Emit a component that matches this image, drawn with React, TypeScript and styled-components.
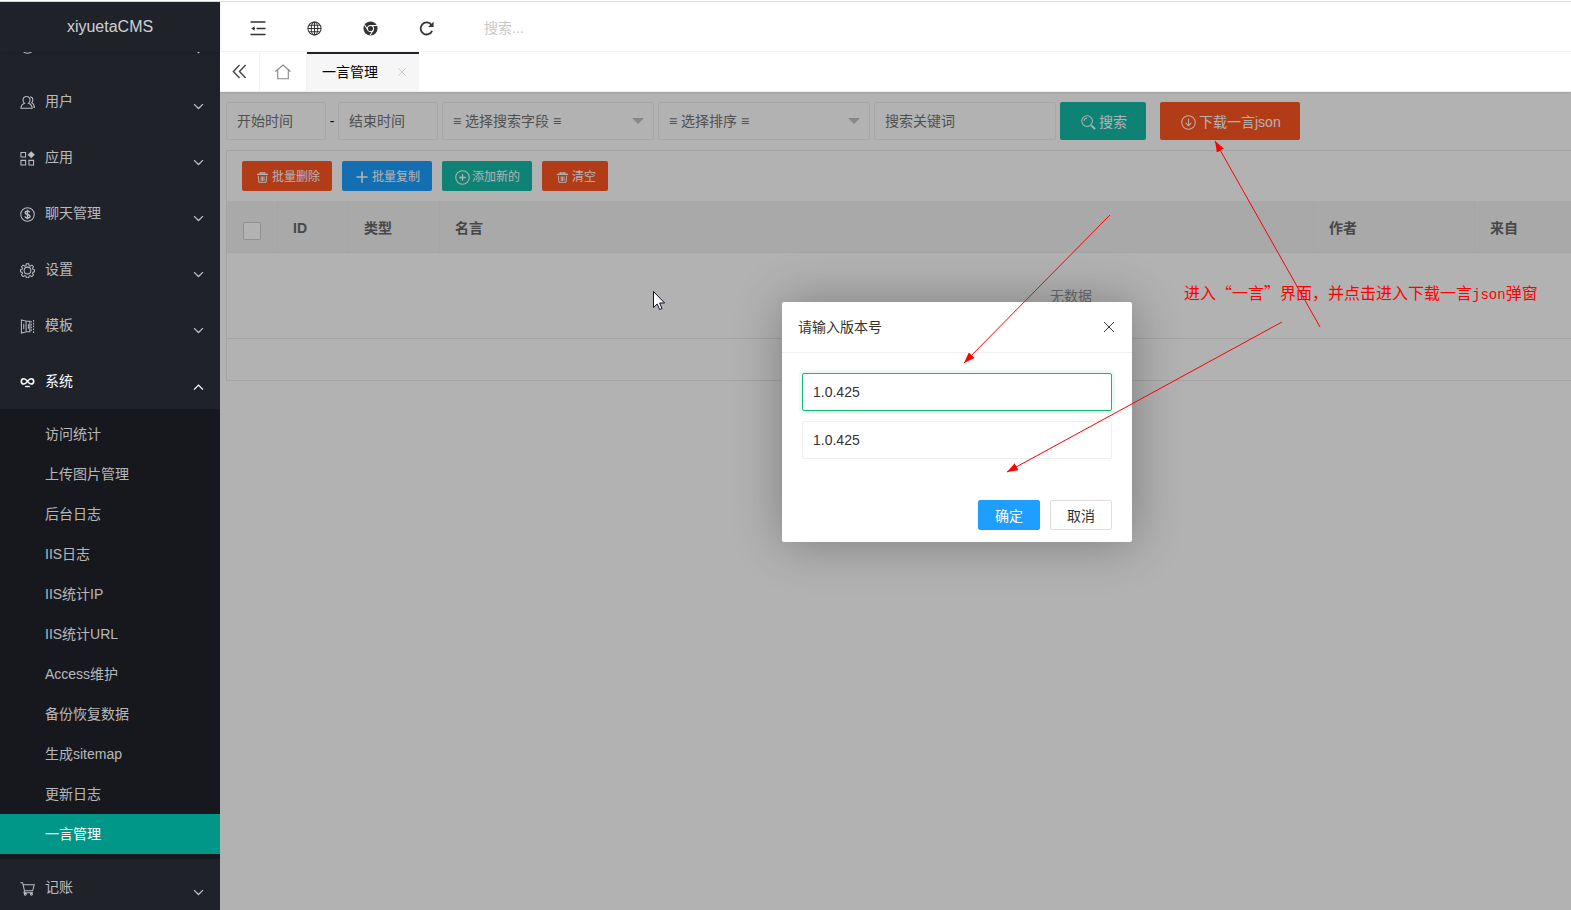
import React from "react";
import styled, { createGlobalStyle, css } from "styled-components";

const GlobalStyle = createGlobalStyle`
  *, *::before, *::after { box-sizing: border-box; }
  html, body, #root { height: 100%; margin: 0; }
  body {
    overflow: hidden;
    background: #fff;
    color: #333;
    font: 14px/20px "Liberation Sans", "Noto Sans CJK SC", sans-serif;
  }
  button, input, select { font: inherit; margin: 0; }
  button { cursor: pointer; }
  ul { list-style: none; margin: 0; padding: 0; }
  a { color: inherit; text-decoration: none; }
`;

/* ---------- icons ---------- */

const shapes: Record<string, React.ReactNode> = {
  user: (
    <>
      <path d="M7 1.5a3.700 3.700 0 0 1 3.700 3.800c0 1.600-.7 2.800-1.700 3.600 2.200.7 3.800 2.300 4 5.300H1c.2-3 1.600-4.600 3.900-5.300-1-.8-1.700-2-1.700-3.600A3.700 3.700 0 0 1 7 1.500z" />
      <path d="M10.800 1.800c2 .3 2.900 1.700 2.900 3.200 0 1.500-.5 2.600-1.300 3.300 2 .8 2.900 2.400 3.100 4.700h-1.500" />
    </>
  ),
  apps: (
    <>
      <path d="M1 1.500h5v5H1zM1 10h5v5H1zM9.500 10h5v5h-5z" />
      <path d="M12 .2L15.800 4 12 7.800 8.200 4z" fill="currentColor" stroke="none" />
    </>
  ),
  dollar: (
    <>
      <circle cx="8" cy="8" r="7.200" />
      <path d="M10.500 5.600C10 4.700 9.100 4.400 8 4.400c-1.500 0-2.500.7-2.500 1.700 0 2.600 5.200 1.100 5.200 3.800 0 1.100-1.200 1.800-2.700 1.800-1.400 0-2.400-.5-2.800-1.500M8 3v10" strokeWidth="1.500" />
    </>
  ),
  gear: (
    <>
      <path d="M6.700.8h2.600l.4 2 1.200.5 1.800-1.100 1.700 1.800-1 1.700.5 1.200 1.700.3v2.200l-1.700.4-.5 1.200 1 1.700-1.700 1.800-1.800-1.100-1.200.5-.4 1.800H6.700l-.4-1.800-1.200-.5-1.800 1.100-1.700-1.800 1-1.700-.5-1.200L.4 9.400V7.200l1.700-.3.5-1.200-1-1.700 1.700-1.800 1.800 1.100 1.200-.5z" />
      <circle cx="8" cy="8" r="3.600" />
    </>
  ),
  template: (
    <>
      <path d="M1.500 1l5 1.200v11.600l-5 1.200z" />
      <path d="M4 5v6M7 2.500h3.500v11H7M9 5.500v5" />
      <path d="M12 2v12M14.500 1v14" strokeDasharray="1.800 1.200" />
    </>
  ),
  infinity: (
    <>
      <path d="M8 6.800C6.500 4.800 5.500 4 4.200 4a2.800 2.800 0 0 0 0 5.600C5.500 9.600 6.500 8.800 8 6.800c1.500-2 2.500-2.800 3.800-2.800a2.800 2.800 0 0 1 0 5.600C10.500 9.600 9.500 8.800 8 6.800z" strokeWidth="1.700" />
      <path d="M5.500 12.300h5" strokeWidth="1.400" />
    </>
  ),
  cart: (
    <>
      <path d="M.5 1.800h2.300l2 8.700h8.700L15.200 4H3.600M4.800 10.500l-.6 2h9.600" />
      <circle cx="5.600" cy="14.200" r="1" />
      <circle cx="12.200" cy="14.200" r="1" />
    </>
  ),
  shrink: (
    <>
      <path d="M.5 2h15M6.500 8.500h9M.5 14.500h15" strokeWidth="1.600" />
      <path d="M4.500 6.300v4.400L1.300 8.500z" fill="currentColor" stroke="none" />
      <path d="M4 8.500h1" />
    </>
  ),
  globe: (
    <>
      <circle cx="8" cy="8" r="7" />
      <ellipse cx="8" cy="8" rx="3.500" ry="7" />
      <path d="M8 1v14M1 8h14M2.200 4.500h11.600M2.200 11.500h11.600" />
    </>
  ),
  chrome: (
    <>
      <circle cx="8" cy="8" r="7.500" fill="currentColor" stroke="none" />
      <circle cx="8" cy="8" r="3.300" stroke="#fff" />
      <path d="M8 4.700h6.700M5.200 9.700L1.800 4.200M10.800 9.700l-3.200 5.600" stroke="#fff" />
    </>
  ),
  refresh: (
    <>
      <path d="M13.300 4.200A6.400 6.400 0 1 0 14 10.500" strokeWidth="1.900" />
      <path d="M15.500.8v5.700H9.800z" fill="currentColor" stroke="none" />
    </>
  ),
  doubleLeft: <path d="M8 1L1.500 8 8 15M14.500 1L8 8l6.500 7" strokeWidth="1.500" />,
  home: <path d="M.5 7.500L8 1l7.500 6.500M2.700 6v8.700h10.600V6" />,
  close: <path d="M2 2l12 12M14 2L2 14" />,
  closeThin: <path d="M3 3l10 10M13 3L3 13" strokeWidth="1" />,
  search: (
    <>
      <circle cx="6.500" cy="6.500" r="5.700" />
      <path d="M3.300 6.500a3.200 3.200 0 0 1 3.200-3.200" />
      <path d="M11 11l4 4" strokeWidth="2" />
    </>
  ),
  download: (
    <>
      <circle cx="8" cy="8" r="7.200" />
      <path d="M8 4v7.500M5 8.500l3 3 3-3" />
    </>
  ),
  trash: (
    <>
      <path d="M0 3.500h16M4.500 3V1.200h7V3" strokeWidth="1.800" />
      <path d="M2 5.500l.7 9.500h10.600l.7-9.500M6 6.500V13M8 6.500V13M10.200 6.500V13" strokeWidth="1.400" />
    </>
  ),
  plus: <path d="M8 .5v15M.5 8h15" strokeWidth="2.200" />,
  circlePlus: (
    <>
      <circle cx="8" cy="8" r="7.200" />
      <path d="M8 4.500v7M4.500 8h7" strokeWidth="1.400" />
    </>
  ),
  down: <path d="M1.500 4.500L8 11l6.500-6.500" strokeWidth="1.900" />,
  up: <path d="M1.500 12.500L8 6l6.500 6.500" strokeWidth="1.900" />,
};

const Glyph = styled.svg`
  display: block;
  flex: none;
  fill: none;
  stroke: currentColor;
  stroke-width: 1.1;
`;

function Icon({ name, size = 16 }: { name: string; size?: number }) {
  return (
    <Glyph width={size} height={size} viewBox="0 0 16 16" aria-hidden="true">
      {shapes[name]}
    </Glyph>
  );
}

/* ---------- shell ---------- */

const Page = styled.div`
  position: relative;
  display: flex;
  flex-direction: column;
  height: 100vh;
  overflow: hidden;
`;

const WindowEdge = styled.div`
  flex: none;
  height: 2px;
  border-bottom: 1px solid #dadada;
`;

const Shell = styled.div`
  display: flex;
  flex: 1;
  min-height: 0;
`;

const Sidebar = styled.aside`
  display: flex;
  flex: none;
  flex-direction: column;
  width: 220px;
  background: #20222a;
  color: rgba(255, 255, 255, 0.7);
`;

const Brand = styled.div`
  flex: none;
  height: 50px;
  line-height: 50px;
  font-size: 16px;
  text-align: center;
  color: rgba(255, 255, 255, 0.8);
  box-shadow: 0 1px 2px rgba(0, 0, 0, 0.15);
`;

const NavScroll = styled.nav`
  flex: 1;
  min-height: 0;
  overflow: hidden;
`;

const NavList = styled.ul`
  margin-top: -35px;
`;

const NavButton = styled.button<{ $open?: boolean }>`
  display: flex;
  align-items: center;
  gap: 10px;
  width: 100%;
  height: 56px;
  padding: 0 16px 0 20px;
  border: 0;
  background: none;
  color: ${(p) => (p.$open ? "#fff" : "inherit")};
  text-align: left;
`;

const NavLabel = styled.span`
  flex: 1;
`;

const NavIcon = styled.span`
  padding-top: 2px;
`;

const Caret = styled.span`
  padding-top: 11px;
`;

const SubList = styled.ul`
  padding: 5px 0;
  border-radius: 2px;
  background: #17181d;
`;

const SubLink = styled.a<{ $active?: boolean }>`
  display: block;
  height: 40px;
  padding-left: 45px;
  line-height: 40px;
  ${(p) =>
    p.$active &&
    css`
      background: #009688;
      color: #fff;
    `}
`;

const Main = styled.main`
  display: flex;
  flex: 1;
  flex-direction: column;
  min-width: 0;
`;

const Header = styled.header`
  display: flex;
  flex: none;
  align-items: center;
  height: 50px;
  padding-left: 10px;
  border-bottom: 1px solid #f4f4f4;
`;

const HeaderButton = styled.button`
  display: flex;
  align-items: center;
  justify-content: center;
  width: 56px;
  height: 49px;
  padding: 3px 0 0;
  border: 0;
  background: none;
  color: #333;
`;

const HeaderSearch = styled.input`
  width: 220px;
  margin-left: 20px;
  padding: 3px 10px 0;
  border: 0;
  outline: 0;
  &::placeholder { color: #c8c8c8; }
`;

const TabBar = styled.div`
  position: relative;
  z-index: 1;
  display: flex;
  flex: none;
  height: 40px;
  background: #fff;
  border-bottom: 1px solid #eee;
  box-shadow: 0 1px 2px rgba(0, 0, 0, 0.1);
`;

const TabButton = styled.button<{ $w: number; $tone: string }>`
  display: flex;
  align-items: center;
  justify-content: center;
  width: ${(p) => p.$w}px;
  padding: 0;
  border: 0;
  border-right: 1px solid #f3f3f3;
  background: none;
  color: ${(p) => p.$tone};
`;

const ActiveTab = styled.div`
  display: flex;
  align-items: center;
  gap: 18px;
  padding: 0 11px 2px 15px;
  border-top: 2px solid #20222a;
  background: #f6f6f6;
  color: #000;
`;

const TabClose = styled.button`
  display: flex;
  padding: 1px;
  border: 0;
  background: none;
  color: #b8b8b8;
`;

const Workspace = styled.section`
  position: relative;
  flex: 1;
  min-height: 0;
  overflow: hidden;
  padding: 10px 0 0 6px;
`;

/* ---------- filters and table ---------- */

const FilterForm = styled.form`
  display: flex;
  align-items: center;
  gap: 4px;
  margin-bottom: 10px;
`;

const DateRange = styled.div`
  display: flex;
  align-items: center;
`;

const Dash = styled.span`
  width: 12px;
  text-align: center;
  color: #000;
`;

const TextField = styled.input<{ $w?: string; $focus?: boolean }>`
  width: ${(p) => p.$w || "100%"};
  height: 38px;
  padding: 0 10px;
  border: 1px solid #eee;
  border-radius: 2px;
  outline: 0;
  background: #fff;
  color: #333;
  &::placeholder { color: #757575; }
  ${(p) =>
    p.$focus &&
    css`
      border-color: #16b777;
      box-shadow: 0 0 0 3px rgba(22, 183, 119, 0.08);
    `}
`;

const SelectWrap = styled.div`
  position: relative;
  width: 212px;
  &::after {
    content: "";
    position: absolute;
    top: 16px;
    right: 10px;
    border: 6px solid transparent;
    border-top-color: #c2c2c2;
    border-bottom: 0;
    pointer-events: none;
  }
`;

const SelectField = styled.select`
  appearance: none;
  width: 100%;
  height: 38px;
  padding: 0 10px;
  border: 1px solid #eee;
  border-radius: 2px;
  background: #fff;
  color: #757575;
`;

const tones = {
  red: "#ff5722",
  blue: "#1e9fff",
  green: "#16baaa",
};

const ActionButton = styled.button<{ $tone: keyof typeof tones; $small?: boolean }>`
  display: inline-flex;
  align-items: center;
  height: ${(p) => (p.$small ? 30 : 38)}px;
  padding: ${(p) => (p.$small ? "2px 12px 0 10px" : "2px 19px 0 17px")};
  border: 0;
  border-radius: 2px;
  background: ${(p) => tones[p.$tone]};
  color: #fff;
  font-size: ${(p) => (p.$small ? 12 : 14)}px;
  white-space: nowrap;
`;

const ButtonIcon = styled.span<{ $small?: boolean }>`
  display: flex;
  justify-content: center;
  width: ${(p) => (p.$small ? 20 : 22)}px;
`;

const SubmitGroup = styled.div`
  display: flex;
  gap: 14px;
`;

const Panel = styled.div`
  border: 1px solid #eaeaea;
  border-right: 0;
  overflow: hidden;
`;

const Toolbar = styled.div`
  display: flex;
  gap: 10px;
  height: 50px;
  padding: 10px 15px;
`;

const Grid = styled.table`
  width: 1688px;
  table-layout: fixed;
  border-collapse: separate;
  border-spacing: 0;
`;

const HeadCell = styled.th<{ $w?: number; $check?: boolean }>`
  width: ${(p) => (p.$w ? p.$w + "px" : "auto")};
  height: 52px;
  padding: ${(p) => (p.$check ? "8px 15px 0 16px" : "2px 15px 0")};
  border-right: 1px solid #eee;
  border-bottom: 1px solid #eee;
  background: #f2f2f2;
  color: #666;
  font-weight: bold;
  text-align: left;
`;

const Check = styled.input`
  display: block;
  appearance: none;
  width: 18px;
  height: 18px;
  margin: 0;
  border: 1px solid #d2d2d2;
  border-radius: 2px;
  background: #fff;
`;

const EmptyCell = styled.td`
  height: 86px;
  padding: 0;
  border-bottom: 1px solid #eaeaea;
  color: #999;
  text-align: center;
`;

const Pager = styled.div`
  height: 41px;
`;

/* ---------- dialog ---------- */

const Shade = styled.div`
  position: absolute;
  inset: 0;
  background: rgba(0, 0, 0, 0.3);
`;

const Dialog = styled.div`
  position: absolute;
  top: 210px;
  left: 562px;
  width: 350px;
  border-radius: 2px;
  background: #fff;
  box-shadow: 1px 1px 50px rgba(0, 0, 0, 0.3);
`;

const DialogTitle = styled.div`
  display: flex;
  align-items: center;
  justify-content: space-between;
  height: 51px;
  padding: 0 15px 0 16px;
  border-bottom: 1px solid #f0f0f0;
`;

const DialogClose = styled.button`
  display: flex;
  padding: 0;
  border: 0;
  background: none;
  color: #333;
`;

const DialogBody = styled.div`
  display: flex;
  flex-direction: column;
  gap: 10px;
  padding: 20px 20px 41px;
`;

const DialogActions = styled.div`
  display: flex;
  justify-content: flex-end;
  gap: 10px;
  padding: 0 20px 12px;
`;

const DialogButton = styled.button<{ $primary?: boolean }>`
  width: 62px;
  height: 30px;
  padding: 2px 0 0;
  border: 1px solid ${(p) => (p.$primary ? "#1e9fff" : "#dedede")};
  border-radius: 2px;
  background: ${(p) => (p.$primary ? "#1e9fff" : "#fff")};
  color: ${(p) => (p.$primary ? "#fff" : "#333")};
`;

/* ---------- annotations ---------- */

const Arrows = styled.svg`
  position: absolute;
  top: 0;
  left: 0;
  z-index: 2;
  width: 100%;
  height: 100%;
  pointer-events: none;
`;

const Note = styled.p`
  position: absolute;
  top: 280px;
  left: 1184px;
  z-index: 2;
  margin: 0;
  color: #f00;
  font: 16px/24px "Noto Sans CJK SC", sans-serif;
  white-space: nowrap;
`;

const NoteLatin = styled.span`
  font: 14px "Liberation Mono", monospace;
`;

const arrows = [
  [1110, 215, 964, 363],
  [1320, 327, 1215, 141],
  [1282, 322, 1007, 472],
];

const navBefore = [
  { label: "用户", icon: "user" },
  { label: "应用", icon: "apps" },
  { label: "聊天管理", icon: "dollar" },
  { label: "设置", icon: "gear" },
  { label: "模板", icon: "template" },
];

const systemPages = [
  "访问统计",
  "上传图片管理",
  "后台日志",
  "IIS日志",
  "IIS统计IP",
  "IIS统计URL",
  "Access维护",
  "备份恢复数据",
  "生成sitemap",
  "更新日志",
  "一言管理",
];

function NavItem({ label, icon, open, children }: { label?: string; icon: string; open?: boolean; children?: React.ReactNode }) {
  return (
    <li>
      <NavButton type="button" $open={open} aria-expanded={!!open} aria-label={label || "主页"}>
        <NavIcon>
          <Icon name={icon} size={15} />
        </NavIcon>
        <NavLabel>{label}</NavLabel>
        <Caret>
          <Icon name={open ? "up" : "down"} size={11} />
        </Caret>
      </NavButton>
      {children}
    </li>
  );
}

function Action({ tone, icon, size, small, children }: { tone: keyof typeof tones; icon: string; size: number; small?: boolean; children: React.ReactNode }) {
  return (
    <ActionButton type="button" $tone={tone} $small={small}>
      <ButtonIcon $small={small}>
        <Icon name={icon} size={size} />
      </ButtonIcon>
      {children}
    </ActionButton>
  );
}

export default function App() {
  return (
    <Page lang="zh-CN">
      <GlobalStyle />
      <WindowEdge />
      <Shell>
        <Sidebar>
          <Brand>xiyuetaCMS</Brand>
          <NavScroll>
            <NavList>
              <NavItem icon="dollar" />
              {navBefore.map((n) => (
                <NavItem key={n.label} {...n} />
              ))}
              <NavItem label="系统" icon="infinity" open>
                <SubList>
                  {systemPages.map((p) => (
                    <li key={p}>
                      <SubLink href="#" $active={p === "一言管理"}>{p}</SubLink>
                    </li>
                  ))}
                </SubList>
              </NavItem>
              <NavItem label="记账" icon="cart" />
            </NavList>
          </NavScroll>
        </Sidebar>
        <Main>
          <Header>
            <HeaderButton type="button" aria-label="侧边伸缩"><Icon name="shrink" /></HeaderButton>
            <HeaderButton type="button" aria-label="前台"><Icon name="globe" size={15} /></HeaderButton>
            <HeaderButton type="button" aria-label="浏览器"><Icon name="chrome" size={15} /></HeaderButton>
            <HeaderButton type="button" aria-label="刷新"><Icon name="refresh" size={15} /></HeaderButton>
            <HeaderSearch aria-label="搜索" placeholder="搜索..." />
          </Header>
          <TabBar>
            <TabButton type="button" $w={40} $tone="#444" aria-label="向左"><Icon name="doubleLeft" size={15} /></TabButton>
            <TabButton type="button" $w={47} $tone="#888" aria-label="主页"><Icon name="home" /></TabButton>
            <ActiveTab>
              一言管理
              <TabClose type="button" aria-label="关闭标签"><Icon name="close" size={10} /></TabClose>
            </ActiveTab>
          </TabBar>
          <Workspace>
            <FilterForm>
              <DateRange>
                <TextField $w="100px" aria-label="开始时间" placeholder="开始时间" />
                <Dash>-</Dash>
                <TextField $w="100px" aria-label="结束时间" placeholder="结束时间" />
              </DateRange>
              <SelectWrap>
                <SelectField aria-label="搜索字段"><option>≡ 选择搜索字段 ≡</option></SelectField>
              </SelectWrap>
              <SelectWrap>
                <SelectField aria-label="排序"><option>≡ 选择排序 ≡</option></SelectField>
              </SelectWrap>
              <TextField $w="182px" aria-label="搜索关键词" placeholder="搜索关键词" />
              <SubmitGroup>
                <Action tone="green" icon="search" size={15}>搜索</Action>
                <Action tone="red" icon="download" size={15}>下载一言json</Action>
              </SubmitGroup>
            </FilterForm>
            <Panel>
              <Toolbar>
                <Action small tone="red" icon="trash" size={11}>批量删除</Action>
                <Action small tone="blue" icon="plus" size={12}>批量复制</Action>
                <Action small tone="green" icon="circlePlus" size={15}>添加新的</Action>
                <Action small tone="red" icon="trash" size={11}>清空</Action>
              </Toolbar>
              <Grid>
                <thead>
                  <tr>
                    <HeadCell $w={51} $check><Check type="checkbox" aria-label="全选" /></HeadCell>
                    <HeadCell $w={71}>ID</HeadCell>
                    <HeadCell $w={91}>类型</HeadCell>
                    <HeadCell $w={874}>名言</HeadCell>
                    <HeadCell $w={161}>作者</HeadCell>
                    <HeadCell>来自</HeadCell>
                  </tr>
                </thead>
                <tbody>
                  <tr><EmptyCell colSpan={6}>无数据</EmptyCell></tr>
                </tbody>
              </Grid>
              <Pager />
            </Panel>
            <Shade />
            <Dialog role="dialog" aria-labelledby="dialog-title">
              <DialogTitle>
                <span id="dialog-title">请输入版本号</span>
                <DialogClose type="button" aria-label="关闭"><Icon name="closeThin" /></DialogClose>
              </DialogTitle>
              <DialogBody>
                <TextField $focus aria-label="版本号" defaultValue="1.0.425" />
                <TextField aria-label="当前版本号" defaultValue="1.0.425" />
              </DialogBody>
              <DialogActions>
                <DialogButton type="button" $primary>确定</DialogButton>
                <DialogButton type="button">取消</DialogButton>
              </DialogActions>
            </Dialog>
          </Workspace>
        </Main>
      </Shell>
      <Arrows aria-hidden="true">
        <defs>
          <marker id="head" markerWidth="11" markerHeight="8" refX="11" refY="4" orient="auto" markerUnits="userSpaceOnUse">
            <path d="M0 0L11 4 0 8z" fill="#f00" />
          </marker>
        </defs>
        {arrows.map(([x1, y1, x2, y2]) => (
          <line key={x1} x1={x1} y1={y1} x2={x2} y2={y2} stroke="#f00" markerEnd="url(#head)" />
        ))}
        <path d="M653.500 291.500v16l3.700-3.500 2.500 5.500 2.300-1-2.400-5.500h5z" fill="#fff" stroke="#112" />
      </Arrows>
      <Note>进入“一言”界面，并点击进入下载一言<NoteLatin>json</NoteLatin>弹窗</Note>
    </Page>
  );
}
